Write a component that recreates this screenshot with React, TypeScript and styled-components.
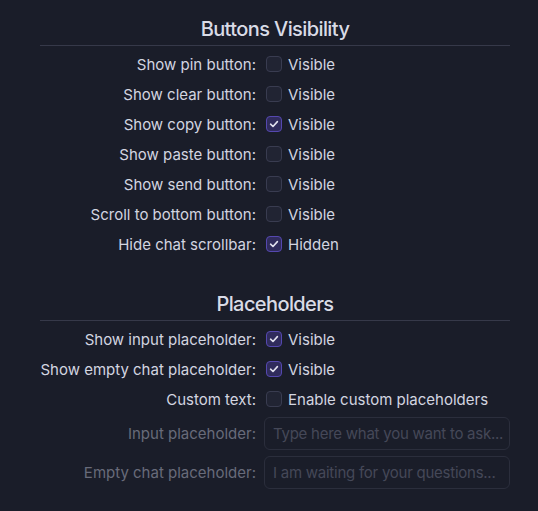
import React from "react";
import styled, { createGlobalStyle } from "styled-components";

const GlobalStyle = createGlobalStyle`
  html, body {
    margin: 0;
    padding: 0;
    background: #1a1d29;
  }
  body {
    font-family: Inter, "Noto Sans", sans-serif;
    color: #d3d5e0;
  }
`;

const Page = styled.div`
  width: 538px;
  height: 511px;
  box-sizing: border-box;
  padding: 17px 28px 0 40px;
  background: #1a1d29;
`;

const Section = styled.section<{ $gap?: string }>`
  margin-top: ${(p) => p.$gap || "0"};
`;

const SectionTitle = styled.h3`
  margin: 0;
  padding: 0 0 4px;
  font-size: 20px;
  line-height: 24px;
  font-weight: 500;
  letter-spacing: -0.6px;
  text-align: center;
  color: #d9dbe6;
  border-bottom: 1px solid #363949;
`;

const Rows = styled.div`
  display: grid;
  grid-template-columns: 216px 1fr;
  column-gap: 8px;
  padding-top: 3px;
`;

const Label = styled.div<{ $disabled?: boolean; $tall?: boolean }>`
  height: ${(p) => (p.$tall ? "39px" : "30px")};
  display: flex;
  align-items: center;
  justify-content: flex-end;
  font-size: 15px;
  white-space: nowrap;
  color: ${(p) => (p.$disabled ? "#686b7a" : "#d3d5e0")};
`;

const Control = styled.label<{ $tall?: boolean }>`
  height: ${(p) => (p.$tall ? "39px" : "30px")};
  display: flex;
  align-items: center;
  gap: 6px;
  font-size: 15px;
  color: #d3d5e0;
  cursor: pointer;
`;

const Box = styled.span<{ $checked?: boolean }>`
  width: 16px;
  height: 16px;
  box-sizing: border-box;
  margin-left: 2px;
  border-radius: 4px;
  display: flex;
  align-items: center;
  justify-content: center;
  border: 1px solid ${(p) => (p.$checked ? "#5548b0" : "#393c50")};
  background: ${(p) => (p.$checked ? "#302c5c" : "#212433")};
`;

const TextInput = styled.input`
  width: 246px;
  height: 33px;
  box-sizing: border-box;
  margin-top: -1px;
  padding: 0 6px 0 8px;
  border: 1px solid #2b2e3c;
  border-radius: 6px;
  background: #1a1d29;
  font-family: Inter, "Noto Sans", sans-serif;
  font-size: 15px;
  letter-spacing: -0.25px;
  color: #d3d5e0;
  outline: none;
  &::placeholder {
    color: #454858;
  }
  &:disabled {
    cursor: default;
  }
`;

const Check = () => (
  <svg width="12" height="12" viewBox="0 0 12 12" fill="none">
    <path
      d="M2.6 6.2 L5 8.5 L9.4 3.6"
      stroke="#e2e2ee"
      strokeWidth="1.6"
      strokeLinecap="round"
      strokeLinejoin="round"
    />
  </svg>
);

type ToggleProps = { label: string; text: string; checked?: boolean };

const ToggleRow: React.FC<ToggleProps> = ({ label, text, checked }) => (
  <>
    <Label>{label}</Label>
    <Control>
      <Box $checked={checked}>{checked && <Check />}</Box>
      {text}
    </Control>
  </>
);

const buttons: ToggleProps[] = [
  { label: "Show pin button:", text: "Visible" },
  { label: "Show clear button:", text: "Visible" },
  { label: "Show copy button:", text: "Visible", checked: true },
  { label: "Show paste button:", text: "Visible" },
  { label: "Show send button:", text: "Visible" },
  { label: "Scroll to bottom button:", text: "Visible" },
  { label: "Hide chat scrollbar:", text: "Hidden", checked: true },
];

const placeholders: ToggleProps[] = [
  { label: "Show input placeholder:", text: "Visible", checked: true },
  { label: "Show empty chat placeholder:", text: "Visible", checked: true },
  { label: "Custom text:", text: "Enable custom placeholders" },
];

export default function App() {
  return (
    <>
      <GlobalStyle />
      <Page>
        <Section>
          <SectionTitle>Buttons Visibility</SectionTitle>
          <Rows>
            {buttons.map((b) => (
              <ToggleRow key={b.label} {...b} />
            ))}
          </Rows>
        </Section>
        <Section $gap="33px">
          <SectionTitle>Placeholders</SectionTitle>
          <Rows>
            {placeholders.map((b) => (
              <ToggleRow key={b.label} {...b} />
            ))}
            <Label $disabled $tall>
              Input placeholder:
            </Label>
            <Control $tall>
              <TextInput disabled placeholder="Type here what you want to ask..." />
            </Control>
            <Label $disabled $tall>
              Empty chat placeholder:
            </Label>
            <Control $tall>
              <TextInput disabled placeholder="I am waiting for your questions..." />
            </Control>
          </Rows>
        </Section>
      </Page>
    </>
  );
}
